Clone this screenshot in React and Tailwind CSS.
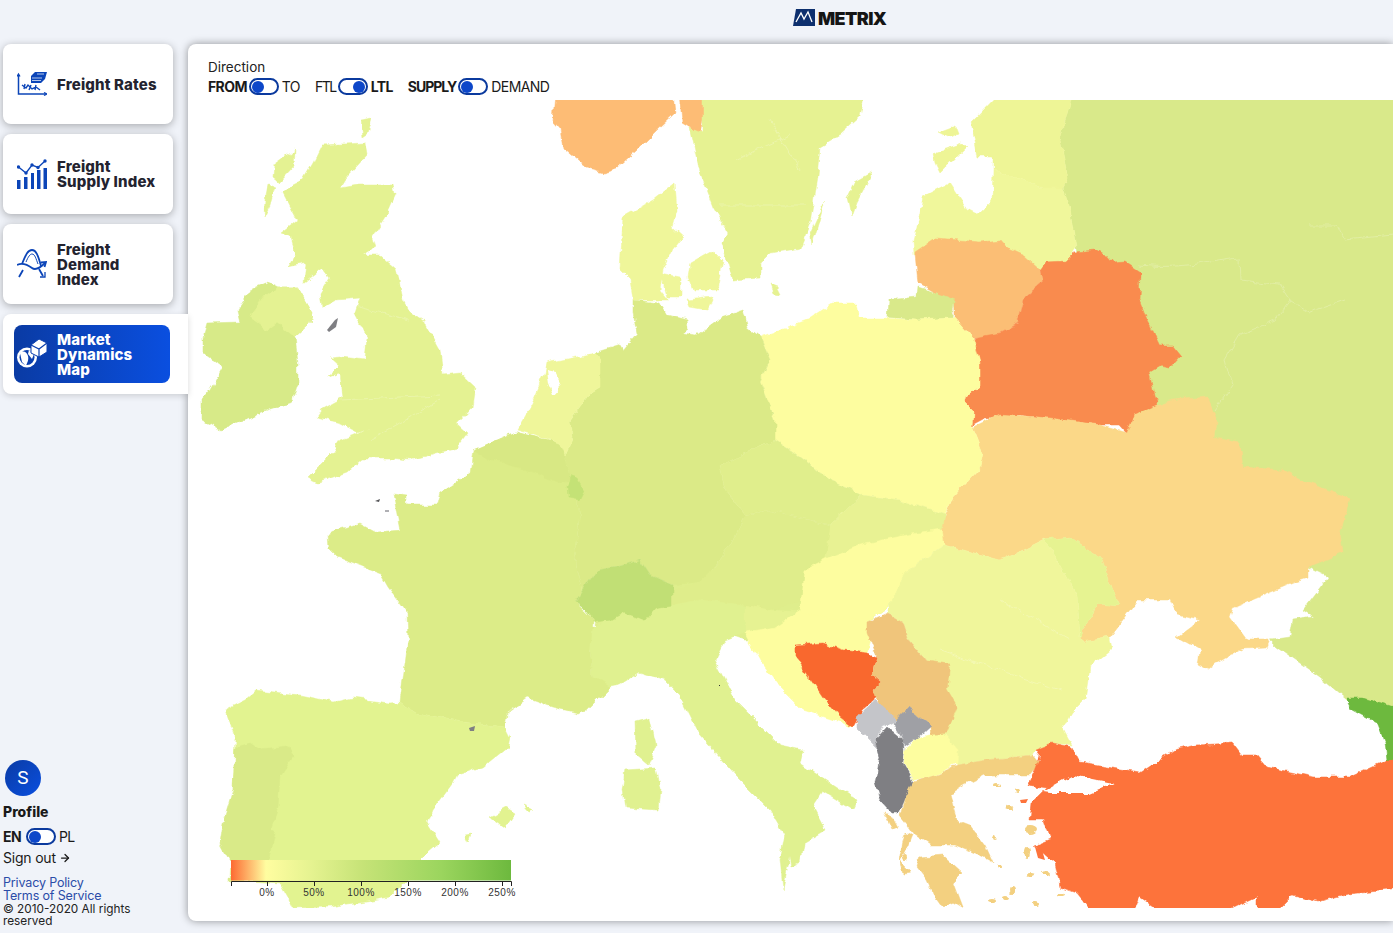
import React from 'react';
import { ArrowRight } from 'lucide-react';

// map shapes, in page coordinates (viewBox starts where the map panel starts)
const countries = [
  // underlay so the central borders have no holes
  ['#dfee8c', '585,610 640,595 672,585 830,525 945,515 942,545 905,572 890,605 867,622 865,640 790,640 745,640 672,615 600,630'],
  // Russia
  ['#d9e98a', '1073,92 1400,92 1400,712 1347,700 1320,677 1277,647 1270,640 1290,637 1293,620 1313,617 1303,610 1328,577 1308,567 1200,500 1100,400 1077,247 1070,207 1063,188 1068,178 1060,140'],
  // Estonia
  ['#eef596', '970,123 1000,92 1073,92 1060,140 1068,178 1063,188 1043,188 1023,180 993,170 993,157 977,157'],
  ['#eef596', '933,153 963,143 967,147 940,173 935,163'],
  ['#eef596', '938,132 957,125 960,133 950,138'],
  // Latvia
  ['#f0f79b', '913,240 923,197 950,183 967,210 977,215 992,200 993,170 1023,180 1043,188 1063,188 1070,207 1077,247 1067,263 1040,270 980,260 930,250 914,255'],
  // Lithuania
  ['#fbbe75', '915,253 937,238 980,242 1000,240 1007,248 1023,255 1040,270 1043,282 1025,297 1018,323 1000,333 987,338 973,337 955,317 955,303 918,283'],
  // Kaliningrad
  ['#d9e98a', '888,300 917,297 918,287 937,293 955,300 953,318 917,320 887,317'],
  // Belarus
  ['#f98b4e', '972,338 1000,333 1018,323 1025,297 1043,282 1040,270 1045,263 1065,262 1075,252 1097,250 1105,255 1112,263 1125,262 1140,272 1139,300 1145,315 1160,345 1172,345 1181,356 1170,368 1160,366 1150,372 1155,395 1158,405 1140,412 1132,425 1130,436 1120,425 1100,425 1060,420 1020,415 985,418 972,425 973,410 963,400 980,387 980,363'],
  // Ukraine
  ['#fbd888', '973,427 1000,414 1050,418 1100,425 1128,433 1135,415 1158,405 1173,400 1207,397 1217,420 1215,438 1240,443 1243,467 1283,470 1300,480 1347,497 1350,500 1340,533 1343,553 1308,567 1308,578 1293,583 1233,608 1230,617 1247,640 1270,640 1267,647 1243,648 1217,663 1207,670 1198,665 1200,650 1177,637 1200,620 1177,615 1170,600 1137,600 1113,633 1110,637 1083,642 1080,637 1097,603 1120,605 1113,590 1100,557 1070,537 1043,540 1013,555 1000,560 945,545 940,530 953,497 980,467 983,453'],
  // Moldova
  ['#e6f391', '1043,540 1070,537 1100,557 1113,590 1120,605 1097,603 1080,637 1077,597 1050,547'],
  // Georgia
  ['#6db93e', '1347,698 1363,698 1400,710 1400,760 1387,760 1385,743 1377,723 1353,710'],
  // Poland
  ['#fdfd9f', '760,337 807,320 833,303 857,303 860,318 883,318 917,320 953,318 955,317 973,337 980,363 980,387 963,400 973,410 972,425 983,453 980,467 953,497 945,515 900,500 862,495 830,480 790,450 775,440 775,420 760,380 770,360'],
  // Germany
  ['#dbea87', '633,300 660,303 667,315 687,320 688,328 682,333 697,335 720,318 743,310 748,327 760,337 770,360 760,380 775,420 775,440 720,465 725,490 745,515 730,545 720,560 700,582 672,585 650,575 640,560 617,567 597,570 583,590 575,560 580,510 570,480 565,455 573,437 570,420 590,393 600,387 600,360 595,353 620,345 623,350 637,333 633,313'],
  // Czechia
  ['#e0ee8c', '720,465 775,440 790,450 830,480 862,495 830,525 770,510 745,515 725,490'],
  // Slovakia
  ['#e8f293', '830,525 862,495 900,500 945,515 942,530 905,535 860,545 825,560'],
  // Austria
  ['#dfed8b', '730,545 745,515 770,510 830,525 825,560 805,570 808,600 770,610 745,605 700,600 672,605 672,590 700,582 720,560'],
  // Hungary
  ['#fdfd9f', '805,570 825,560 860,545 905,535 942,530 945,545 905,572 890,605 867,622 830,622 800,612'],
  // Romania and Bulgaria
  ['#f0f69b', '905,572 945,545 1000,560 1013,555 1043,540 1050,547 1077,597 1080,637 1083,642 1110,637 1112,650 1090,667 1085,700 1072,713 1063,728 1072,745 1053,743 1035,750 1032,755 987,760 957,765 945,735 930,735 925,660 908,638 903,623 887,613 890,605'],
  // Italy
  ['#e0f190', '585,625 595,625 625,612 645,620 655,608 672,605 700,600 745,605 745,632 725,640 715,660 735,700 780,745 803,750 800,763 857,800 852,810 823,792 813,807 825,830 803,843 800,863 792,867 790,857 783,890 780,860 785,835 770,810 735,775 700,735 680,695 665,680 640,672 620,685 605,688 593,677 590,650'],
  ['#e0f190', '635,722 650,718 656,745 648,765 636,755'],
  ['#e0f190', '625,770 655,768 660,790 658,810 625,808 622,790'],
  // Slovenia
  ['#e6f292', '745,605 770,610 800,612 775,627 745,632'],
  // Croatia
  ['#fdfd9f', '745,632 775,627 800,610 830,620 867,618 870,640 867,653 843,650 823,643 795,645 795,657 800,663 823,697 840,717 853,727 840,722 803,710 780,687 760,660'],
  // Bosnia
  ['#f9682e', '795,645 823,643 843,650 867,653 877,657 872,673 882,682 873,690 877,697 862,710 857,720 853,727 840,717 823,697 800,663 795,657'],
  // Serbia
  ['#f0c57b', '867,622 887,613 903,623 908,638 925,660 950,663 947,690 957,707 947,733 930,735 928,723 908,707 897,720 880,707 873,690 882,682 872,673 877,657 867,633'],
  // Montenegro
  ['#c4c5c9', '875,700 897,720 883,727 875,740 877,748 857,728 857,717'],
  // Kosovo
  ['#9fa0a5', '908,707 928,723 930,727 918,738 905,747 903,740 893,723'],
  // Albania
  ['#7f7f83', '887,727 903,740 904,750 902,763 913,782 905,797 898,813 892,813 880,800 875,783 880,757 875,740'],
  // North Macedonia
  ['#fdfd9f', '905,750 918,738 928,735 945,735 958,750 957,763 930,777 913,780 903,763'],
  // Greece
  ['#f3d080', '957,765 987,760 1033,755 1040,763 1030,775 985,775 965,785 957,790 950,795 957,820 970,825 985,845 993,862 980,855 955,845 930,845 915,835 908,825 900,815 905,797 913,782 930,777'],
  ['#f3d080', '920,857 943,855 963,873 953,883 962,907 950,900 943,907 933,893 927,880 917,867'],
  ['#f3d080', '884,813 890,815 897,828 892,830'],
  ['#f3d080', '905,832 912,835 908,845 900,862 910,872 903,873 899,860'],
  // Turkey
  ['#fd733b', '1035,750 1053,743 1072,747 1080,763 1140,772 1173,750 1197,745 1233,743 1242,755 1257,755 1267,767 1313,777 1350,777 1387,760 1400,760 1400,888 1350,893 1317,902 1293,895 1270,918 1257,918 1257,897 1240,905 1213,918 1170,918 1140,897 1132,918 1097,918 1077,893 1060,887 1055,863 1043,853 1033,847 1050,840 1043,820 1030,820 1032,803 1047,788 1028,785 1035,770 1040,757'],
  // France
  ['#dcec88', '393,493 407,495 407,505 437,505 440,493 470,473 473,450 515,432 560,443 565,455 570,480 580,510 575,560 583,590 575,603 593,620 590,650 593,677 610,687 587,710 577,713 553,707 528,698 507,713 505,727 463,722 417,713 400,702 408,640 407,613 388,587 380,573 337,557 328,548 327,533 360,523 377,532 400,530'],
  // Belgium
  ['#d8e884', '473,450 515,432 560,443 565,455 570,480 558,482 520,468 490,460'],
  // Luxembourg
  ['#c4e276', '571,476 577,478 584,490 579,500 568,498 567,485'],
  // Switzerland
  ['#c1df75', '575,603 583,590 597,570 617,567 640,560 650,575 672,585 672,605 655,608 645,620 625,612 610,620 595,622 585,610'],
  // Netherlands
  ['#eff69a', '517,430 530,407 545,373 547,363 595,353 600,360 600,387 590,393 570,420 573,437 565,455 560,443'],
  // Spain
  ['#e2f390', '225,710 245,700 257,690 300,695 333,702 353,698 390,703 400,702 417,713 463,722 505,727 510,737 508,747 483,767 457,775 453,783 433,810 428,823 440,842 427,853 407,880 390,897 330,907 293,908 288,897 280,883 230,880 235,737'],
  ['#e2f390', '490,817 507,808 515,813 505,828'],
  ['#e2f390', '522,805 533,810 528,812'],
  ['#e2f390', '465,835 472,834 469,843'],
  // Portugal
  ['#d9ea88', '235,747 250,743 260,750 287,747 293,757 280,777 278,807 270,830 275,833 270,857 262,880 230,882 232,865 220,843 223,823 233,790'],
  // Great Britain
  ['#e4f292', '322,145 365,143 367,155 347,177 340,188 357,185 393,185 395,195 385,217 372,237 375,247 362,255 380,255 397,270 403,300 410,313 425,323 440,350 443,375 460,373 475,387 472,407 457,423 468,433 457,448 410,460 390,458 363,458 347,472 317,483 307,478 332,453 340,440 370,428 357,432 340,423 317,417 323,408 343,397 340,373 328,378 340,367 330,358 340,357 365,360 367,337 355,313 360,298 337,300 322,308 320,293 330,277 323,268 305,282 307,263 288,267 295,253 290,237 280,233 297,220 283,193 293,185 303,180 313,163'],
  ['#e4f292', '295,150 294,165 278,182 273,178 274,165'],
  ['#e4f292', '268,185 275,188 270,205 264,217 265,200'],
  ['#e4f292', '360,120 372,118 368,133 362,137'],
  // Ireland
  ['#d7ea88', '207,323 240,322 237,310 250,290 268,282 278,287 297,287 312,313 310,323 295,337 298,363 298,383 292,402 267,410 220,430 202,420 202,400 210,390 223,367 203,353 203,337'],
  // Northern Ireland
  ['#e4f292', '278,287 297,287 312,313 310,323 295,337 277,323 267,330 250,317 265,297'],
  // Norway
  ['#fdbc75', '555,92 673,92 675,113 657,130 637,150 617,168 603,172 587,168 563,147 560,130 553,122'],
  ['#fdbc75', '680,92 703,92 703,120 700,132 683,122'],
  // Sweden
  ['#e6f292', '703,92 865,92 860,117 840,135 820,147 817,177 810,223 800,248 770,253 760,263 760,278 733,280 730,270 722,243 728,233 713,207 700,173 690,127 703,132'],
  ['#e6f292', '873,172 857,203 852,217 848,197 855,182'],
  ['#e6f292', '825,200 812,245 810,233'],
  ['#e6f292', '770,285 778,288 781,294 773,293'],
  // Denmark
  ['#eff69a', '675,183 677,210 672,227 683,237 673,250 663,270 660,290 668,300 633,300 630,280 620,270 623,217 653,200'],
  ['#eff69a', '690,263 713,250 723,260 717,290 693,290 688,277'],
  ['#eff69a', '660,273 680,277 680,297 667,297'],
  ['#eff69a', '687,300 713,297 707,310 690,307'],
];

// water drawn over the land
const water = [
  '1043,792 1073,775 1113,783 1090,793 1050,793',
  '547,370 556,372 562,385 553,395 549,385',
  '1085,700 1075,720 1080,745 1063,728',
];

const specks = [
  ['#7f7f83', '327,330 335,320 338,318 336,327 329,332'],
  ['#7f7f83', '469,728 475,726 474,731 470,731'],
  ['#555558', '375,501 380,499 379,502'],
  ['#b0b0b4', '385,510 389,510 389,512 385,512'],
  ['#333333', '719,685 720,685 720,686 719,686'],
  ['#fd733b', '1020,800 1028,799 1026,803 1021,803'],
  ['#fd733b', '1035,847 1042,850 1045,860 1038,858'],
];

const islands = [
  [997, 785, 3, 2], [1018, 792, 2, 2], [1010, 808, 4, 2], [994, 838, 2, 2],
  [1030, 830, 7, 4], [1028, 852, 3, 6], [1000, 866, 3, 2], [1013, 890, 3, 4],
  [993, 900, 4, 2], [1036, 903, 3, 2], [1030, 875, 4, 2], [1047, 873, 5, 2],
  [905, 858, 2, 3], [1060, 895, 4, 2], [1005, 898, 3, 2],
];

const borders = [
  'M1140 265 C1180 270 1215 260 1240 258 L1241 280 L1280 285 L1290 300 L1310 312 L1345 300',
  'M1290 300 L1275 320 L1240 335 L1225 360 L1232 385 L1215 410',
  'M1310 225 L1338 225 L1345 240 L1393 235',
  'M735 160 L790 135 M720 205 L805 205 M770 120 L800 170',
  'M350 305 L410 320 M340 400 L440 395 M370 440 L440 400',
  'M1000 600 L1070 640 M940 650 L1060 690',
];

const legendTicks = [
  [267, '0%'],
  [314, '50%'],
  [361, '100%'],
  [408, '150%'],
  [455, '200%'],
  [502, '250%'],
];

function Toggle({ on }) {
  return (
    <span
      className={`ml-[2px] mr-[3px] flex h-[17px] w-[30px] shrink-0 items-center rounded-full border-2 border-[#0b3a9e] bg-white px-[1px] ${on ? 'justify-end' : 'justify-start'}`}
    >
      <span className="h-[12px] w-[12px] rounded-full bg-[#0d47c9]" />
    </span>
  );
}

function Switch({ left, right, on, leftClass = '' }) {
  return (
    <div className="flex items-center text-[14px] leading-[17px] tracking-[-0.6px] text-[#1a1a1a]">
      <span className={`${on ? 'font-normal' : 'font-bold'} ${leftClass}`}>{left}</span>
      <Toggle on={on} />
      <span className={on ? 'font-bold' : 'font-normal'}>{right}</span>
    </div>
  );
}

function RatesIcon() {
  return (
    <svg viewBox="0 0 30 26" className="h-[26px] w-[30px] shrink-0" fill="none" stroke="#0c45b8">
      <path d="M1.5 4V23H29" strokeWidth="1.5" />
      <path d="M0 5.5L1.5 3L3 5.5M27 21.5L30 23L27 24.5" strokeWidth="1.3" />
      <path d="M5 14L9 17L11 14L15 18L19 16L23 19M8 13L7 18M14 14L12 19M19 14L18 19" strokeWidth="1.4" />
      <path d="M14 5L18 1H30L28 8L24 12H14Z" fill="#0c45b8" stroke="none" />
      <path d="M15 7H25M15 9.500H24M20 3L27 3" stroke="#fff" strokeWidth="0.7" />
    </svg>
  );
}

function SupplyIcon() {
  return (
    <svg viewBox="0 0 30 30" className="h-[30px] w-[30px] shrink-0">
      <path d="M0 30V21H3.500V30ZM7 30V18H10.500V30ZM14 30V14H17V30ZM20 30V11H23.500V30ZM26.500 30V9H30V30Z" fill="#0c45b8" />
      <path d="M1.500 8L9 14L15 6L21 8.500L28 2" fill="none" stroke="#0c45b8" strokeWidth="1.400" />
      <circle cx="1.500" cy="8" r="1.700" fill="#0c45b8" />
      <circle cx="9" cy="14" r="1.700" fill="#0c45b8" />
      <circle cx="15" cy="6" r="1.700" fill="#0c45b8" />
      <circle cx="21" cy="8.500" r="1.700" fill="#0c45b8" />
      <circle cx="28" cy="2" r="1.700" fill="#0c45b8" />
    </svg>
  );
}

function DemandIcon() {
  return (
    <svg viewBox="0 0 30 30" className="h-[30px] w-[30px] shrink-0" fill="none" stroke="#0c45b8" strokeWidth="1.800">
      <path d="M5 15C9 5 11 1 15 1C19 1 21 6 24 17" />
      <path d="M9 13C11 8 13 5 15 5C18 5 19 10 21 15" strokeWidth="1" />
      <path d="M0 16C6 13 11 16 15 19C19 22 24 18 28 14" />
      <path d="M24 13.500L29 13L27.500 18" />
      <path d="M6 21L2 28M22 20L26 27" />
      <path d="M23 28H28V23" strokeWidth="1.300" />
    </svg>
  );
}

function MarketIcon() {
  return (
    <svg viewBox="0 0 30 32" className="h-[32px] w-[30px] shrink-0">
      <circle cx="10" cy="19.500" r="10" fill="#fff" />
      <circle cx="10" cy="19.500" r="7.500" fill="#0a3fae" />
      <path d="M3 15C6 12 10 14 11 18C12 22 10 25 9 28L5 24ZM12 12L17 16L15 21L11 16Z" fill="#fff" />
      <path d="M14 7L22 1L30 5V14L22 19L14 15Z" fill="#fff" stroke="#0a3fae" strokeWidth="1" />
      <path d="M14 7L22 11L30 5M22 11V19" fill="none" stroke="#0a3fae" strokeWidth="1.200" />
    </svg>
  );
}

function NavCard({ icon, lines, active }) {
  if (active) {
    return (
      <div className="flex h-[80px] w-[185px] items-center rounded-l-lg bg-white pl-[11px] shadow-[0_2px_6px_rgba(0,0,0,0.15)]">
        <div className="flex h-[58px] w-[156px] items-center gap-[10px] rounded-lg bg-gradient-to-r from-[#0a3ba4] to-[#0a4fe0] pl-[3px]">
          {icon}
          <div className="text-[15px] font-extrabold leading-[15px] tracking-[0.15px] text-white">
            {lines.map((line) => (
              <div key={line}>{line}</div>
            ))}
          </div>
        </div>
      </div>
    );
  }
  return (
    <div className="flex h-[80px] w-[170px] items-center gap-[10px] rounded-lg bg-white pl-[14px] shadow-[0_2px_8px_rgba(0,0,0,0.3)]">
      {icon}
      <div className="text-[15px] font-extrabold leading-[15px] tracking-[0.15px] text-[#23232f]">
        {lines.map((line) => (
          <div key={line}>{line}</div>
        ))}
      </div>
    </div>
  );
}

function EuropeMap() {
  return (
    <svg viewBox="188 100 1205 808" className="block h-[808px] w-[1205px]">
      <defs>
        {/* roughens the straight polygon edges into coastlines */}
        <filter id="rough" filterUnits="userSpaceOnUse" x="180" y="85" width="1225" height="840" colorInterpolationFilters="sRGB">
          <feTurbulence type="fractalNoise" baseFrequency="0.09" numOctaves="3" seed="4" />
          <feDisplacementMap in="SourceGraphic" scale="7" xChannelSelector="R" yChannelSelector="G" />
        </filter>
      </defs>
      <g filter="url(#rough)">
        {countries.map(([fill, points], i) => (
          <polygon key={i} points={points} fill={fill} stroke={fill} strokeWidth="0.500" strokeLinejoin="round" />
        ))}
        {borders.map((d, i) => (
          <path key={i} d={d} fill="none" stroke="#ffffff" strokeOpacity="0.22" strokeWidth="1" />
        ))}
        {water.map((points, i) => (
          <polygon key={i} points={points} fill="#ffffff" />
        ))}
        {islands.map(([cx, cy, rx, ry], i) => (
          <ellipse key={i} cx={cx} cy={cy} rx={rx} ry={ry} fill="#f3d080" />
        ))}
      </g>
      {specks.map(([fill, points], i) => (
        <polygon key={i} points={points} fill={fill} />
      ))}
    </svg>
  );
}

function Legend() {
  return (
    <svg viewBox="0 0 300 45" className="absolute left-[41px] top-[816px] h-[45px] w-[300px] font-['Liberation_Sans',sans-serif]">
      <defs>
        <linearGradient id="legend-scale">
          <stop offset="0" stopColor="#fd6a32" />
          <stop offset="0.125" stopColor="#fffda0" />
          <stop offset="0.28" stopColor="#e6f391" />
          <stop offset="0.47" stopColor="#c6e377" />
          <stop offset="0.75" stopColor="#9bd55e" />
          <stop offset="1" stopColor="#6db93e" />
        </linearGradient>
      </defs>
      <rect x="2" y="0" width="280" height="20.500" fill="url(#legend-scale)" />
      <path d="M2.500 26V21.500H282.500V26" fill="none" stroke="#222" strokeWidth="1" />
      {legendTicks.map(([x, label]) => (
        <g key={label}>
          <path d={`M${x - 228.500} 21.500V26`} stroke="#222" strokeWidth="1" />
          <text x={x - 229} y="36" textAnchor="middle" fontSize="10" letterSpacing="0.5" fill="#333">
            {label}
          </text>
        </g>
      ))}
    </svg>
  );
}

export default function App() {
  return (
    <div className="flex h-screen flex-col overflow-hidden bg-[#f0f3f9] font-['Inter',sans-serif] text-[#1a1a1a]">
      <header className="flex h-[44px] shrink-0 items-start pl-[793px] pt-[9px]">
        <svg viewBox="0 0 22 17" className="h-[17px] w-[22px]">
          <path d="M3 0H22V17H0Z" fill="#0d2f6e" />
          <path d="M3 13L8 4L11 10L15 3L19 13" fill="none" stroke="#fff" strokeWidth="1.300" />
        </svg>
        <span className="ml-[3px] mt-[1px] text-[18px] font-black leading-[18px] tracking-[-0.6px] text-[#151515]">METRIX</span>
      </header>

      <div className="flex min-h-0 flex-1">
        <aside className="relative z-10 flex w-[188px] shrink-0 flex-col pb-[6px] pl-[3px]">
          <div className="flex flex-col gap-[10px]">
            <NavCard icon={<RatesIcon />} lines={['Freight Rates']} />
            <NavCard icon={<SupplyIcon />} lines={['Freight', 'Supply Index']} />
            <NavCard icon={<DemandIcon />} lines={['Freight', 'Demand', 'Index']} />
            <NavCard icon={<MarketIcon />} lines={['Market', 'Dynamics', 'Map']} active />
          </div>

          <div className="mt-auto">
            <div className="ml-[2px] flex h-[36px] w-[36px] items-center justify-center rounded-full bg-gradient-to-br from-[#0a3ba4] to-[#0a4fe0] font-['Roboto',sans-serif] text-[19px] text-white">
              S
            </div>
            <div className="mt-[7px] text-[14px] font-extrabold leading-[17px]">Profile</div>
            <div className="mt-[8px]">
              <Switch left="EN" right="PL" leftClass="pr-[3px]" />
            </div>
            <div className="mt-[3px] flex items-center gap-[3px] text-[14px] leading-[20px] tracking-[-0.2px]">
              Sign out
              <ArrowRight size={12} strokeWidth={2.5} />
            </div>
            <div className="mt-[8px] text-[12.500px] leading-[13px] tracking-[-0.15px] text-[#2b4ca8]">
              <div>Privacy Policy</div>
              <div>Terms of Service</div>
            </div>
            <div className="mt-[1px] w-[150px] text-[11.800px] leading-[12px] text-[#222]">
              © 2010-2020 All rights reserved
            </div>
          </div>
        </aside>

        <main className="relative mb-[12px] flex-1 overflow-hidden rounded-l-lg bg-white shadow-[0_0_8px_rgba(0,0,0,0.4)]">
          <div className="h-[56px] pl-[20px] pt-[15px]">
            <div className="text-[13.500px] leading-[16px] text-[#222]">Direction</div>
            <div className="mt-[3px] flex gap-[15px]">
              <Switch left="FROM" right="TO" />
              <Switch left="FTL" right="LTL" on leftClass="tracking-[-1.500px]" />
              <Switch left="SUPPLY" right="DEMAND" leftClass="tracking-[-1px]" />
            </div>
          </div>
          <EuropeMap />
          <Legend />
        </main>
      </div>
    </div>
  );
}
